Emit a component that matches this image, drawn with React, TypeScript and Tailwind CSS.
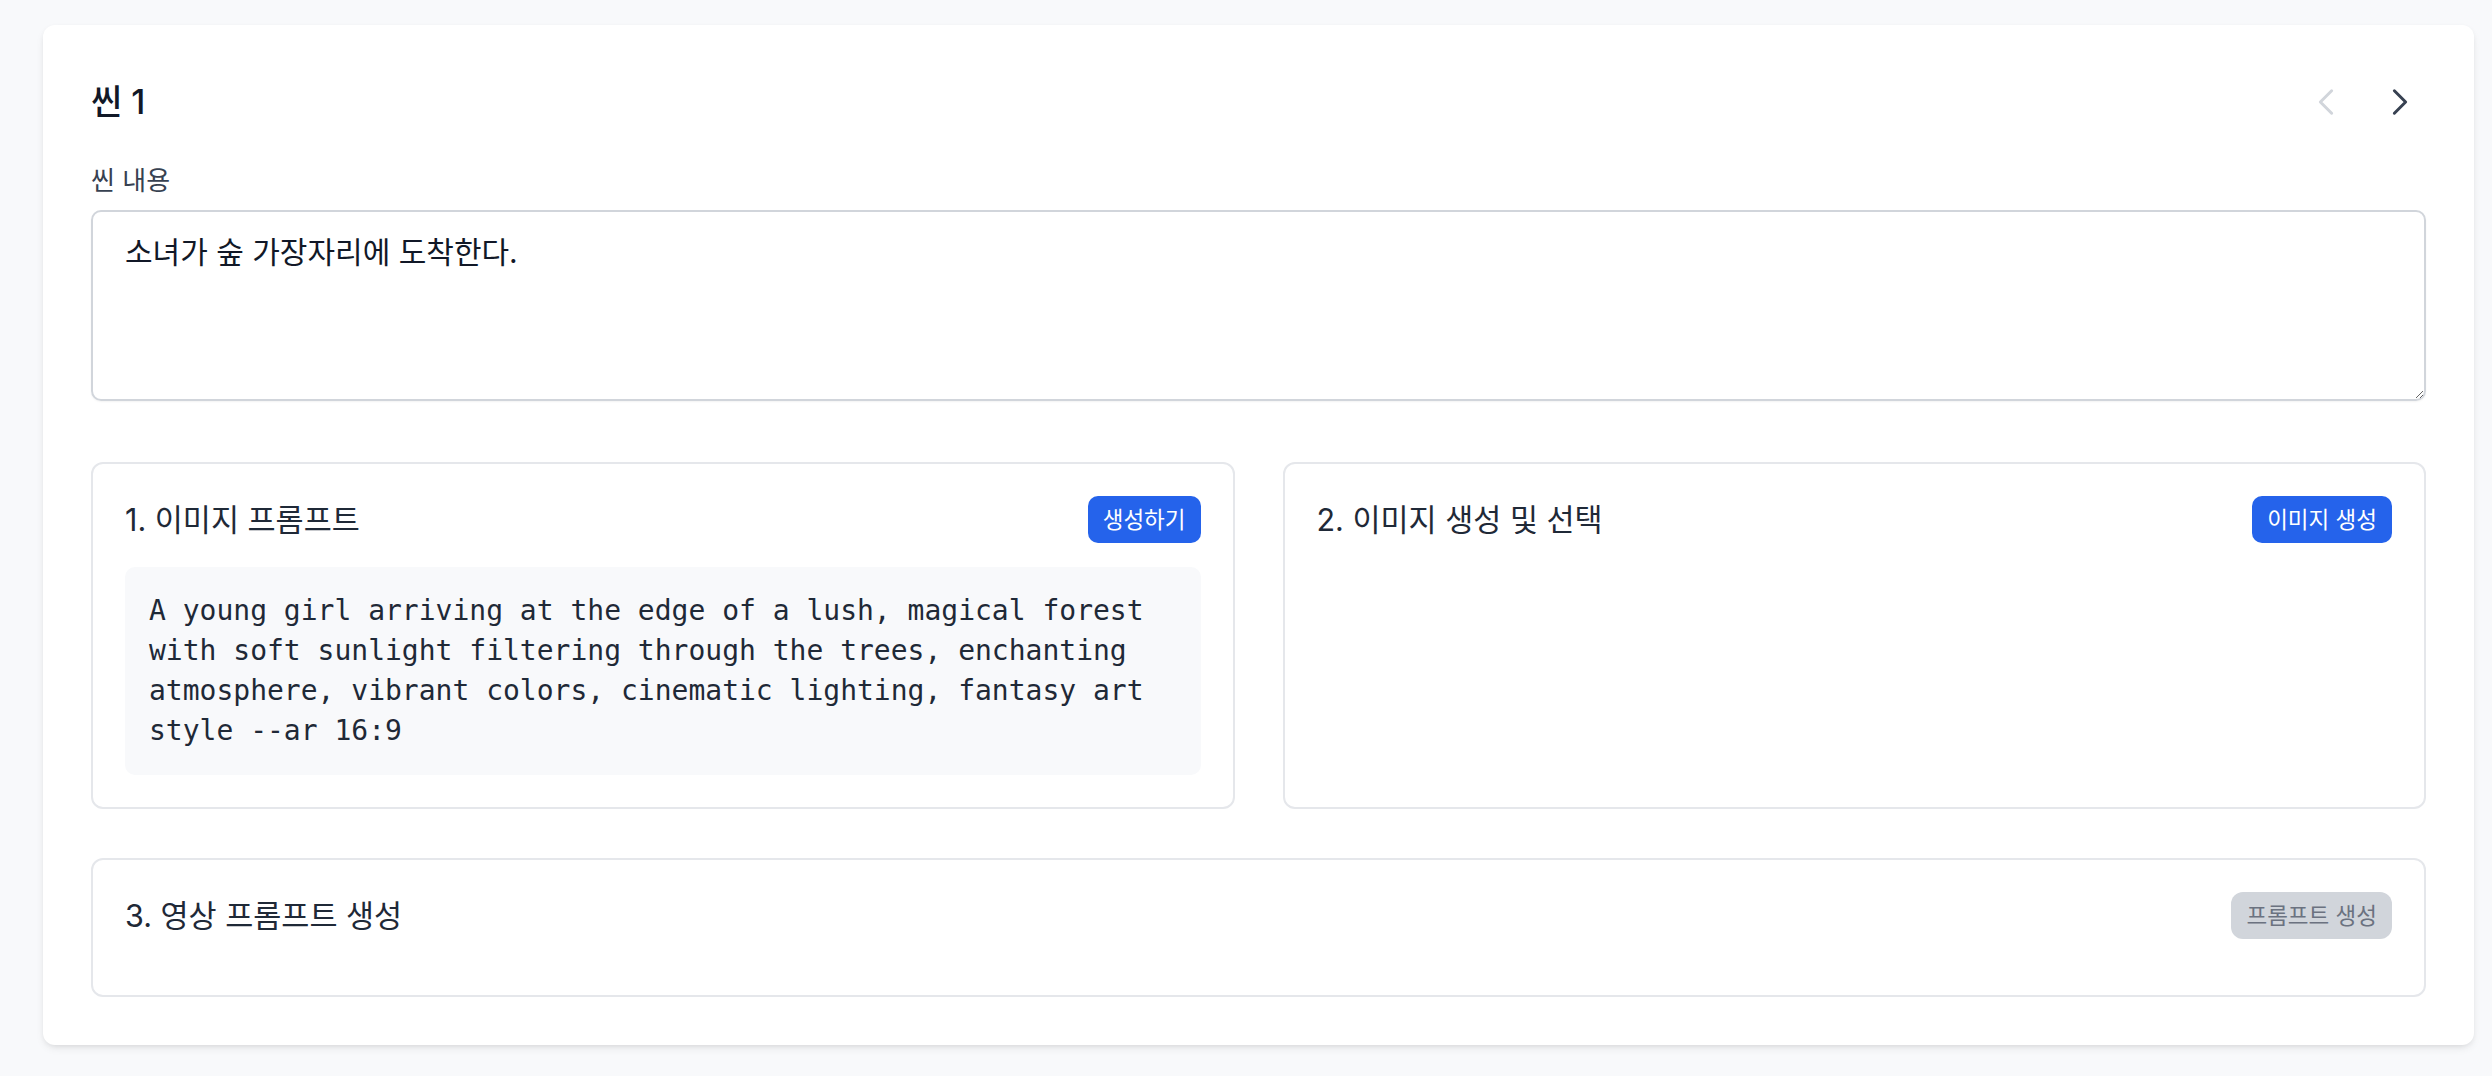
import React from "react";

const ChevronLeft = () => (
  <svg width="36" height="36" viewBox="0 0 24 24" fill="none" stroke="currentColor" strokeWidth={2} strokeLinecap="round" strokeLinejoin="round">
    <path d="M15.75 19.5 8.25 12l7.5-7.5" />
  </svg>
);

const ChevronRight = () => (
  <svg width="36" height="36" viewBox="0 0 24 24" fill="none" stroke="currentColor" strokeWidth={2} strokeLinecap="round" strokeLinejoin="round">
    <path d="m8.25 4.5 7.5 7.5-7.5 7.5" />
  </svg>
);

function SectionTitle({ children }: { children: React.ReactNode }) {
  return <h3 className="text-[30.5px] leading-[38px] font-normal text-[#1f2937]">{children}</h3>;
}

function PrimaryButton({ children }: { children: React.ReactNode }) {
  return (
    <button className="h-[47px] px-[15px] rounded-[10px] bg-[#2563eb] text-white text-[22.5px] leading-[30px] flex items-center">
      {children}
    </button>
  );
}

export default function App() {
  return (
    <div className="min-h-screen bg-[#f8f9fb] pt-[25px] pb-[30px] pl-[43px] pr-[18px] font-['Inter','Noto_Sans_CJK_KR',sans-serif]">
      <div className="bg-white rounded-[12px] shadow-[0_4px_10px_-2px_rgba(0,0,0,0.1),0_2px_6px_-2px_rgba(0,0,0,0.08)] p-[48px]">
        <div className="flex items-center justify-between h-[58px] mb-[35px]">
          <h2 className="text-[34px] leading-[42px] font-medium text-[#111827]">씬 1</h2>
          <div className="flex gap-[22px]">
            <button className="w-[52px] h-[52px] flex items-center justify-center text-[#d1d5db]">
              <ChevronLeft />
            </button>
            <button className="w-[52px] h-[52px] flex items-center justify-center text-[#374151]">
              <ChevronRight />
            </button>
          </div>
        </div>

        <label className="block text-[26px] leading-[30px] text-[#374151] mb-[14px]">씬 내용</label>
        <textarea
          className="block w-full h-[191px] border-2 border-[#d1d5db] rounded-[10px] px-[32px] py-[22px] text-[30px] leading-[36px] text-[#111827] shadow-[0_1px_2px_rgba(0,0,0,0.05)] outline-none font-['Inter','Noto_Sans_CJK_KR',sans-serif]"
          defaultValue="소녀가 숲 가장자리에 도착한다."
        />

        <div className="grid grid-cols-2 gap-[48px] mt-[61px]">
          <div className="border-2 border-[#e5e7eb] rounded-[12px] p-[32px]">
            <div className="flex items-center justify-between h-[47px] mb-[24px]">
              <SectionTitle>1. 이미지 프롬프트</SectionTitle>
              <PrimaryButton>생성하기</PrimaryButton>
            </div>
            <div className="bg-[#f8f9fb] rounded-[10px] p-[24px] font-['DejaVu_Sans_Mono',monospace] text-[28px] leading-[40px] text-[#1f2937]">
              A young girl arriving at the edge of a lush, magical forest with soft sunlight filtering through the trees, enchanting atmosphere, vibrant colors, cinematic lighting, fantasy art style --ar 16:9
            </div>
          </div>
          <div className="border-2 border-[#e5e7eb] rounded-[12px] p-[32px]">
            <div className="flex items-center justify-between h-[47px] mb-[24px]">
              <SectionTitle>2. 이미지 생성 및 선택</SectionTitle>
              <PrimaryButton>이미지 생성</PrimaryButton>
            </div>
          </div>
        </div>

        <div className="mt-[49px] border-2 border-[#e5e7eb] rounded-[12px] p-[32px]">
          <div className="flex items-center justify-between h-[47px] mb-[24px]">
            <SectionTitle>3. 영상 프롬프트 생성</SectionTitle>
            <button className="h-[47px] px-[15px] rounded-[12px] bg-[#d1d5db] text-[#6b7280] text-[22.5px] leading-[30px] flex items-center">
              프롬프트 생성
            </button>
          </div>
        </div>
      </div>
    </div>
  );
}
